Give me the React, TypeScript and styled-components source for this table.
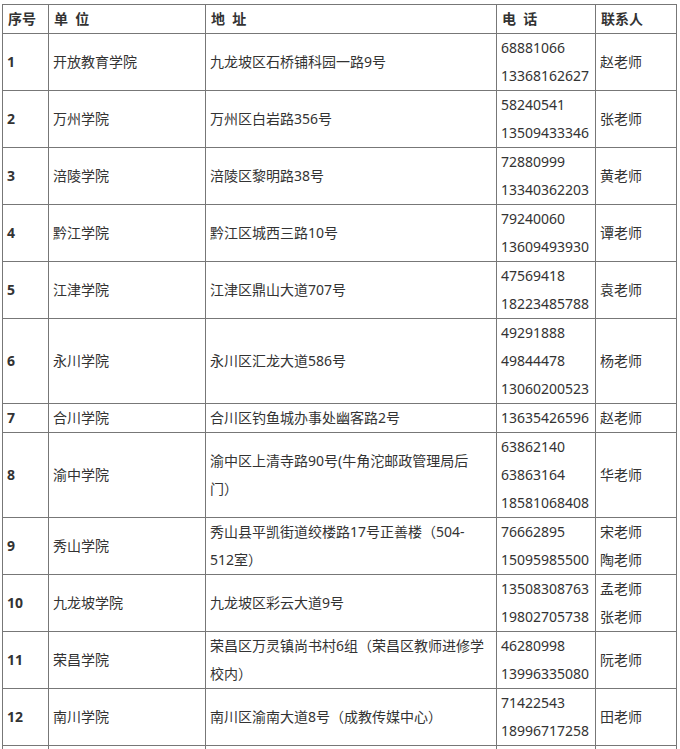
import styled, { createGlobalStyle } from 'styled-components'

type Row = {
  no: string
  unit: string
  address: string
  phones: string[]
  contacts: string[]
}

const rows: Row[] = [
  { no: '1', unit: '开放教育学院', address: '九龙坡区石桥铺科园一路9号', phones: ['68881066', '13368162627'], contacts: ['赵老师'] },
  { no: '2', unit: '万州学院', address: '万州区白岩路356号', phones: ['58240541', '13509433346'], contacts: ['张老师'] },
  { no: '3', unit: '涪陵学院', address: '涪陵区黎明路38号', phones: ['72880999', '13340362203'], contacts: ['黄老师'] },
  { no: '4', unit: '黔江学院', address: '黔江区城西三路10号', phones: ['79240060', '13609493930'], contacts: ['谭老师'] },
  { no: '5', unit: '江津学院', address: '江津区鼎山大道707号', phones: ['47569418', '18223485788'], contacts: ['袁老师'] },
  { no: '6', unit: '永川学院', address: '永川区汇龙大道586号', phones: ['49291888', '49844478', '13060200523'], contacts: ['杨老师'] },
  { no: '7', unit: '合川学院', address: '合川区钓鱼城办事处幽客路2号', phones: ['13635426596'], contacts: ['赵老师'] },
  { no: '8', unit: '渝中学院', address: '渝中区上清寺路90号(牛角沱邮政管理局后门）', phones: ['63862140', '63863164', '18581068408'], contacts: ['华老师'] },
  { no: '9', unit: '秀山学院', address: '秀山县平凯街道绞楼路17号正善楼（504-512室）', phones: ['76662895', '15095985500'], contacts: ['宋老师', '陶老师'] },
  { no: '10', unit: '九龙坡学院', address: '九龙坡区彩云大道9号', phones: ['13508308763', '19802705738'], contacts: ['孟老师', '张老师'] },
  { no: '11', unit: '荣昌学院', address: '荣昌区万灵镇尚书村6组（荣昌区教师进修学校内）', phones: ['46280998', '13996335080'], contacts: ['阮老师'] },
  { no: '12', unit: '南川学院', address: '南川区渝南大道8号（成教传媒中心）', phones: ['71422543', '18996717258'], contacts: ['田老师'] },
  { no: '', unit: '', address: '', phones: [''], contacts: [''] },
]

const GlobalStyle = createGlobalStyle`
  html, body { margin: 0; padding: 0; background: #fff; }
  body { font-family: "Noto Sans", "Noto Sans CJK SC", sans-serif; }
`

const Page = styled.div`
  padding: 4px 0 0 2px;
`

const Table = styled.table`
  border-collapse: collapse;
  table-layout: fixed;
  width: 674px;
  font-size: 14px;
  line-height: 28px;
  color: #333;
`

const Th = styled.th`
  border: 1px solid #777;
  padding: 0 5px;
  text-align: left;
  font-weight: bold;
  color: #333;
  white-space: pre;
`

const Td = styled.td<{ $bold?: boolean; $nowrap?: boolean; $padRight?: number }>`
  border: 1px solid #777;
  padding: 0 ${p => p.$padRight ?? 5}px 0 4px;
  vertical-align: middle;
  font-weight: ${p => (p.$bold ? 'bold' : 'normal')};
  white-space: ${p => (p.$nowrap ? 'nowrap' : 'normal')};
  word-break: normal;
`

const Line = styled.div`
  height: 28px;
`

export default function App() {
  return (
    <Page>
      <GlobalStyle />
      <Table>
        <colgroup>
          <col style={{ width: 46 }} />
          <col style={{ width: 157 }} />
          <col style={{ width: 291 }} />
          <col style={{ width: 99 }} />
          <col style={{ width: 81 }} />
        </colgroup>
        <thead>
          <tr>
            <Th>序号</Th>
            <Th>单  位</Th>
            <Th>地  址</Th>
            <Th>电  话</Th>
            <Th>联系人</Th>
          </tr>
        </thead>
        <tbody>
          {rows.map((r, i) => (
            <tr key={i}>
              <Td $bold>{r.no}</Td>
              <Td>{r.unit}</Td>
              <Td $padRight={11}>{r.address}</Td>
              <Td $nowrap>
                {r.phones.map((p, j) => (
                  <Line key={j}>{p}</Line>
                ))}
              </Td>
              <Td $nowrap>
                {r.contacts.map((c, j) => (
                  <Line key={j}>{c}</Line>
                ))}
              </Td>
            </tr>
          ))}
        </tbody>
      </Table>
    </Page>
  )
}
